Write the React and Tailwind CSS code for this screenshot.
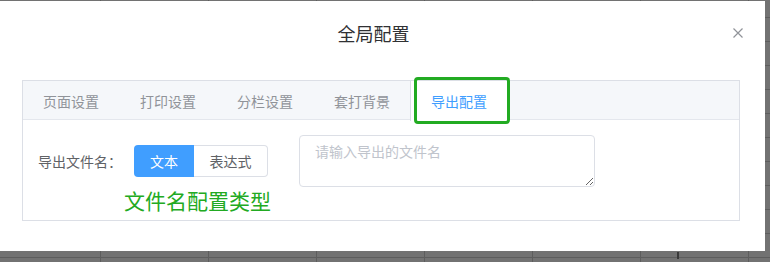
import React from "react";

function Tab({ label, active }) {
  return (
    <div
      className={
        "-ml-px h-10 px-5 border-x text-[14px] leading-10 whitespace-nowrap " +
        (active
          ? "bg-white border-[#dcdfe6] text-[#409eff]"
          : "border-transparent text-[#909399]")
      }
    >
      {label}
    </div>
  );
}

export default function App() {
  return (
    <div className="relative w-[770px] h-[262px] overflow-hidden bg-[#727272] font-['Noto_Sans_CJK_SC','Noto_Sans',sans-serif]">
      {/* spreadsheet grid behind the overlay */}
      <div className="absolute inset-0 bg-[linear-gradient(to_right,#5d5d5d_1px,transparent_1px),linear-gradient(to_bottom,#5d5d5d_1px,transparent_1px)] bg-size-[108px_24px] bg-position-[100px_17px]" />
      <div className="absolute left-[677px] top-[252px] w-[2px] h-[7px] bg-[#3a3a3a]" />

      {/* dialog */}
      <div className="absolute left-0 top-[1px] w-[765px] h-[250px] bg-white">
        <div className="relative pt-5 pr-[18px] flex justify-center">
          <span className="text-[18px] leading-6 text-[#303133]">全局配置</span>
          <button className="absolute right-[22px] top-[27px] w-[10px] h-[10px]">
            <svg width="10" height="10" viewBox="0 0 10 10" className="block">
              <path d="M0.5 0.5L9.5 9.5M9.5 0.5L0.5 9.5" stroke="#909399" strokeWidth="1.2" fill="none" />
            </svg>
          </button>
        </div>

        <div className="relative ml-[22px] mt-[35px] w-[718px] h-[141px] border border-[#dcdfe6] flex flex-col">
          <div className="h-[39px] shrink-0 bg-[#f5f7fa] border-b border-[#e4e7ed] flex items-start">
            <Tab label="页面设置" />
            <Tab label="打印设置" />
            <Tab label="分栏设置" />
            <Tab label="套打背景" />
            <Tab label="导出配置" active />
          </div>
          <div className="relative flex-1 p-[15px] flex items-start">
            <div className="w-[96px] pr-3 h-8 mt-[10px] flex items-center text-[14px] text-[#606266] whitespace-nowrap">
              导出文件名：
            </div>
            <div className="mt-[10px] flex h-8 text-[14px]">
              <div className="w-[60px] flex items-center justify-center bg-[#409eff] text-white rounded-l-[4px]">
                文本
              </div>
              <div className="w-[74px] flex items-center justify-center border-y border-r border-[#dcdfe6] text-[#606266] rounded-r-[4px]">
                表达式
              </div>
            </div>
            <textarea
              placeholder="请输入导出的文件名"
              className="ml-[31px] w-[296px] h-[52px] border border-[#dcdfe6] rounded-[4px] px-[15px] py-[5px] text-[14px] leading-[21px] text-[#606266] placeholder:text-[#c0c4cc] outline-none resize-y"
            />
            <div className="absolute left-[101px] top-[70px] text-[21px] leading-[21px] text-[#22aa22] whitespace-nowrap">
              文件名配置类型
            </div>
          </div>
        </div>

        {/* annotation highlight around active tab */}
        <div className="absolute left-[414px] top-[76px] w-[96px] h-[47px] border-[3px] border-[#22ab22] rounded-[4px]" />
      </div>
    </div>
  );
}
